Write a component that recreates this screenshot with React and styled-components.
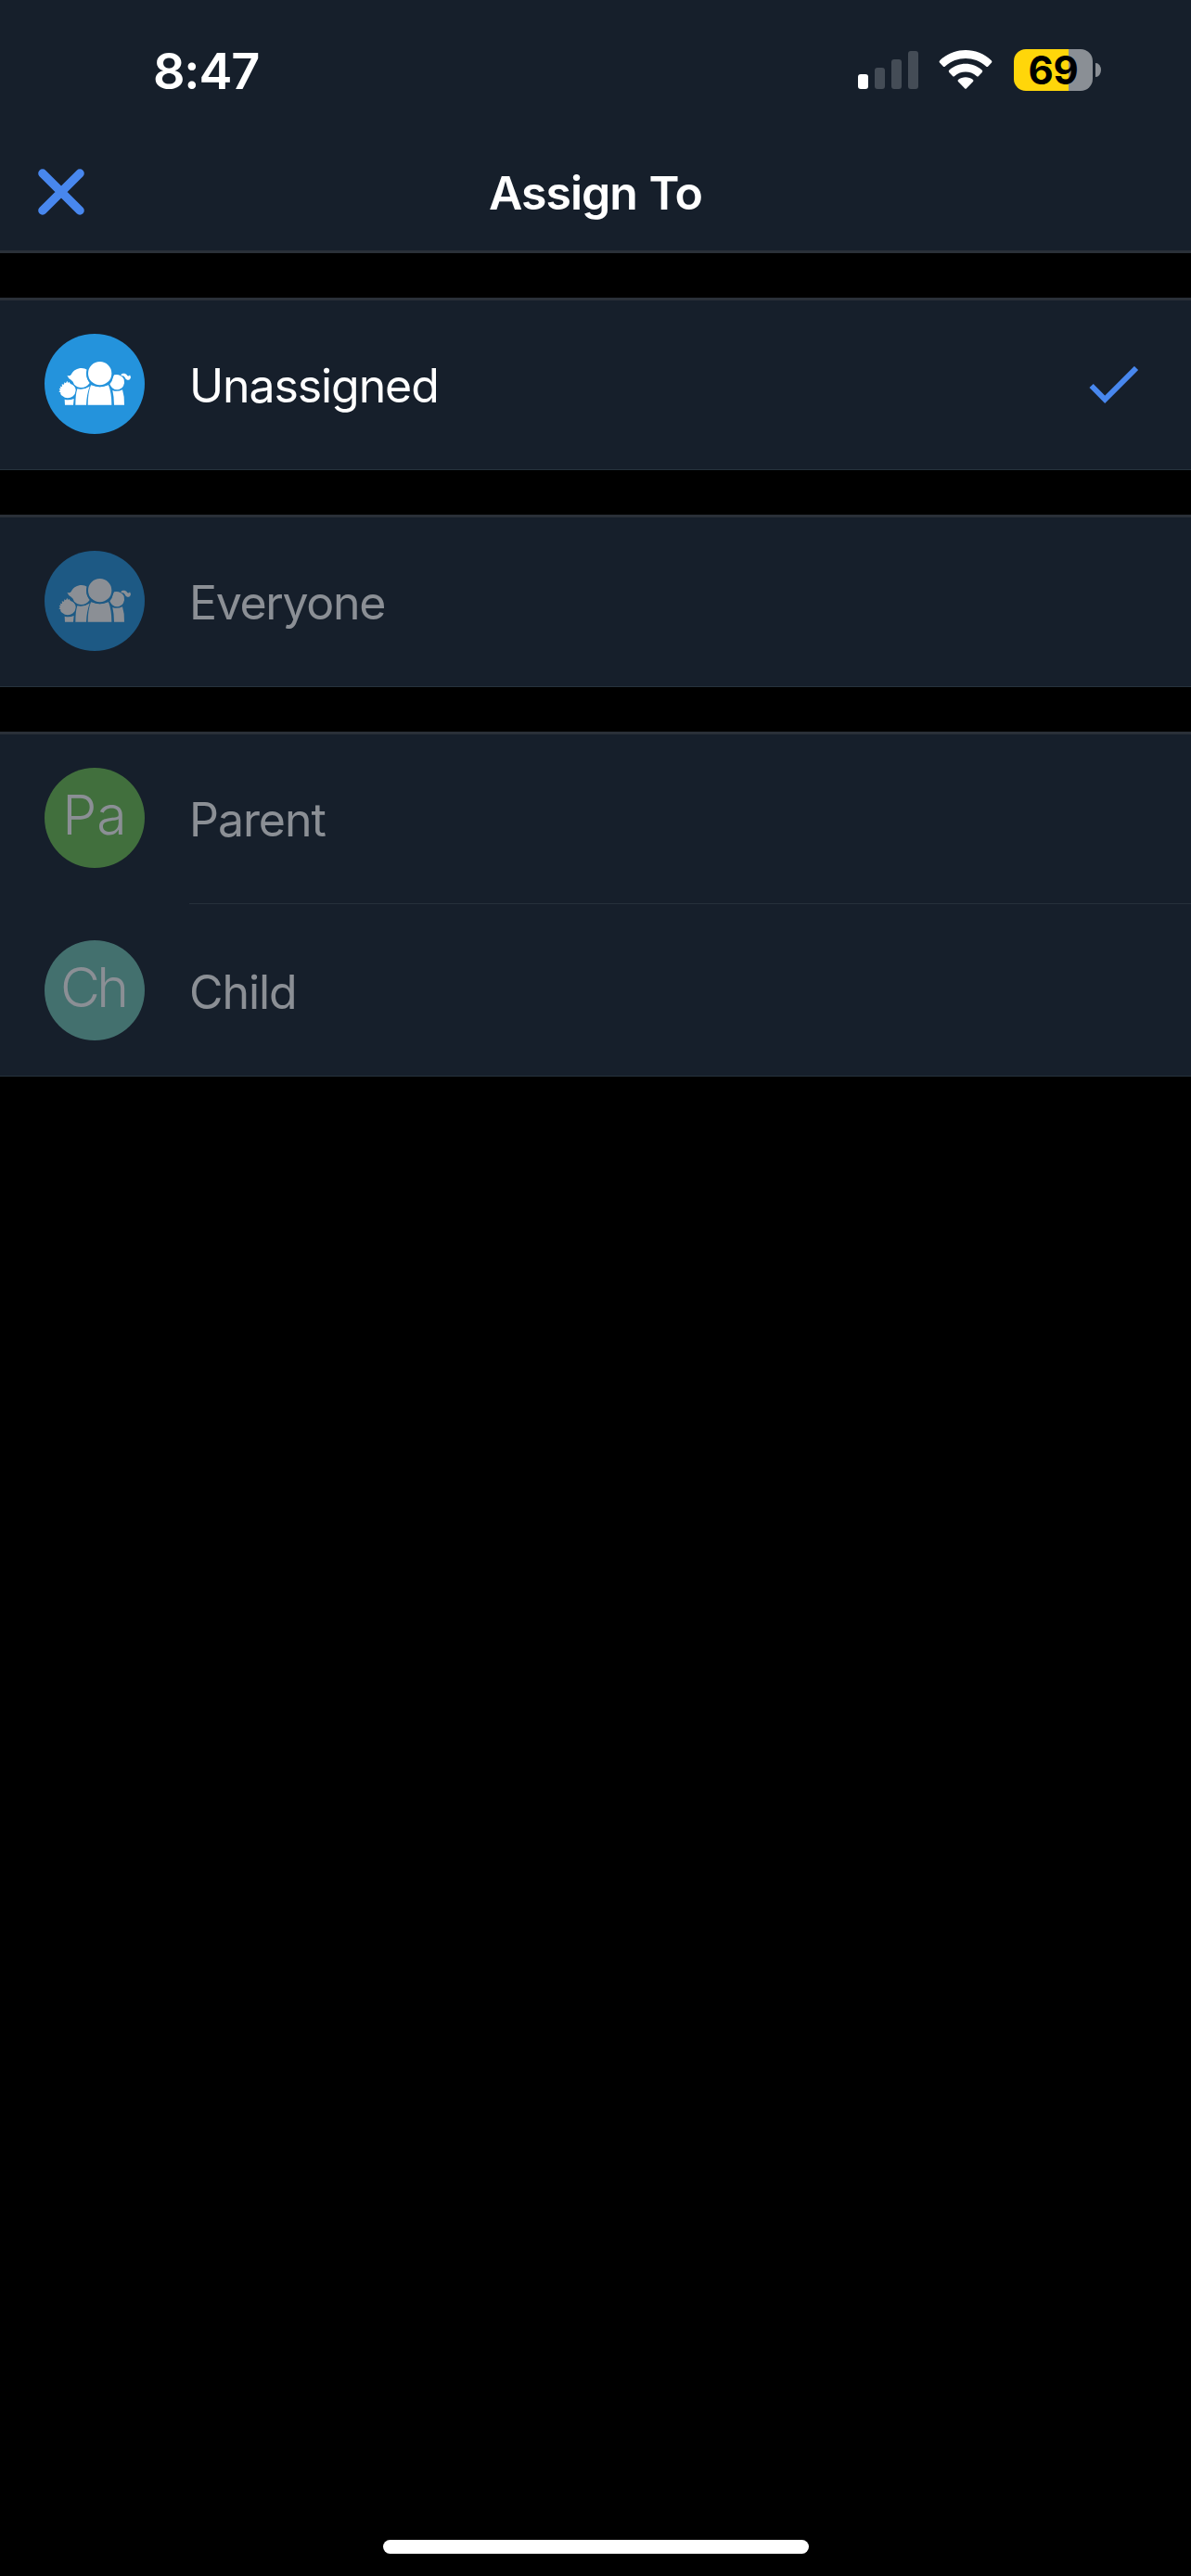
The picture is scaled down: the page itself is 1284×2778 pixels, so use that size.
import React from "react";
import styled, { createGlobalStyle } from "styled-components";

const GlobalStyle = createGlobalStyle`
  html, body { margin: 0; background: #000; }
  * { box-sizing: border-box; }
`;

const Screen = styled.main`
  display: flex;
  flex-direction: column;
  width: 1284px;
  height: 2778px;
  background: #000;
  color: #fff;
  font-family: Inter, "Liberation Sans", sans-serif;
  overflow: hidden;
`;

const Header = styled.header`
  height: 273px;
  background: #161f2b;
  border-bottom: 3px solid #2a3038;
`;

const StatusBar = styled.div`
  display: flex;
  align-items: center;
  justify-content: space-between;
  height: 150px;
  padding: 0 97px 0 165px;
`;

const Time = styled.div`
  padding-top: 4px;
  font-size: 54px;
  line-height: 60px;
  font-weight: 600;
  letter-spacing: -1.2px;
`;

const StatusIcons = styled.div`
  display: flex;
  align-items: center;
`;

const Signal = styled.div`
  display: flex;
  align-items: flex-end;
  gap: 7px;
  height: 42px;
  margin-right: 22px;
`;

const Bar = styled.span`
  width: 11px;
  height: ${(p) => p.$h}px;
  border-radius: 3px;
  background: ${(p) => (p.$on ? "#fff" : "#444c56")};
`;

const Wifi = styled.svg`
  width: 58px;
  height: 42px;
  margin-right: 23px;
`;

const Battery = styled.div`
  display: flex;
  align-items: center;
  justify-content: center;
  width: 85px;
  height: 45px;
  border-radius: 13px;
  background: linear-gradient(to right, #ffd60a 59px, #8a8f95 59px);
  color: #000;
  font-size: 42px;
  line-height: 45px;
  font-weight: 650;
  letter-spacing: -0.4px;
`;

const BatteryTip = styled.span`
  width: 6px;
  height: 15px;
  margin-left: 3px;
  border-radius: 0 6px 6px 0 / 0 8px 8px 0;
  background: #8a8f95;
`;

const NavBar = styled.div`
  display: grid;
  grid-template-columns: 132px 1fr 132px;
  align-items: center;
  height: 120px;
`;

const CloseButton = styled.button`
  display: flex;
  padding: 0 0 6px 41px;
  border: 0;
  background: none;
`;

const Title = styled.h1`
  margin: 0;
  padding-bottom: 4px;
  text-align: center;
  font-size: 50px;
  line-height: 60px;
  font-weight: 600;
  letter-spacing: -1px;
  word-spacing: 1px;
`;

const Groups = styled.div`
  display: flex;
  flex-direction: column;
  gap: 48px;
  padding-top: 48px;
`;

const Group = styled.section`
  border-top: 3px solid #2a3038;
  border-bottom: 1px solid #26323d;
  background: #161f2b;
`;

const Row = styled.div`
  display: flex;
  align-items: flex-start;
  height: 182px;
  padding-left: 48px;

  & + & {
    height: 186px;
  }
`;

const Avatar = styled.div`
  flex: none;
  display: flex;
  justify-content: center;
  width: 108px;
  height: 108px;
  margin: ${(p) => (p.$inset ? 40 : 36)}px 48px 0 0;
  border-radius: 50%;
  background: ${(p) => p.$color};
  opacity: ${(p) => (p.$dim ? 0.5 : 1)};
`;

const Initials = styled.span`
  font-size: 59px;
  line-height: 102px;
  font-weight: 270;
  letter-spacing: ${(p) => p.$track}px;
  padding-right: ${(p) => -p.$track}px;
  color: #fff;
`;

const RowBody = styled.div`
  flex: 1;
  display: flex;
  justify-content: space-between;
  height: 100%;
  padding: ${(p) => (p.$divided ? 63 : 60)}px 56px 0 0;
  border-top: ${(p) => (p.$divided ? "1px solid #26303b" : "0")};
`;

const Label = styled.span`
  font-size: 50px;
  line-height: 64px;
  letter-spacing: ${(p) => p.$track}px;
  opacity: ${(p) => (p.$dim ? 0.5 : 1)};
`;

const CheckMark = styled.svg`
  width: 56px;
  height: 44px;
  margin-top: 11px;
`;

const HomeIndicator = styled.div`
  width: 459px;
  height: 15px;
  margin: auto auto 24px 413px;
  border-radius: 8px;
  background: #fff;
`;

function FamilyIcon() {
  return (
    <svg width="108" height="108" viewBox="54 60 324 324" fill="#fff">
      <path d="M119 272Q134 276 149 270L147 290H120Z" />
      <path d="M112 261Q104 257 106 250L100 247L105 243L101 237L107 236L104 230L111 231L110 223L117 224L118 217L123 220L127 212L130 219L133 215Q137 223 145 225Q155 232 155 243Q154 255 146 262Q138 268 129 268Q119 268 112 261Z" />
      <path d="M160 238Q180 242 200 230Q190 257 189 290H154Q154 257 160 238Z" />
      <path
        d="M127 194Q135 198 140 192C148 177 160 171 174 171Q184 171 193 177Q188 194 193 207Q196 214 200 219C193 230 184 234 173 234C164 234 156 230 150 224Q147 213 140 209Q131 205 127 194Z"
        stroke="#2493dc"
        strokeWidth="7"
        paintOrder="stroke"
      />
      <path d="M274 243Q289 249 306 241Q313 263 312 290H279Q279 264 274 243Z" />
      <path d="M279 193Q290 190 299 195Q308 199 311 207Q314 219 309 229Q302 240 289 241Q273 241 265 223Q274 213 275 202Z" />
      <path d="M301 192C306 187 316 187 320 193C323 198 328 198 330 193L333 200C331 211 320 212 316 205C312 197 309 194 303 196Z" />
      <path d="M204 226Q233 237 261 226Q271 252 271 290H194Q194 252 204 226Z" />
      <circle cx="233" cy="188" r="41" fill="none" stroke="#2493dc" strokeWidth="6" />
      <circle cx="233" cy="188" r="38" />
    </svg>
  );
}

const groups = [
  [{ name: "Unassigned", color: "#2493dc", checked: true, track: -1.1 }],
  [{ name: "Everyone", color: "#2493dc", track: -1.35 }],
  [
    { name: "Parent", color: "#6dbe4f", initials: "Pa", initialsTrack: 0, track: -1.05 },
    { name: "Child", color: "#71c0b1", initials: "Ch", initialsTrack: -3.5, track: -1.05 },
  ],
];

export default function App() {
  return (
    <Screen>
      <GlobalStyle />
      <Header>
        <StatusBar>
          <Time>8:47</Time>
          <StatusIcons>
            <Signal>
              <Bar $h={16} $on />
              <Bar $h={23} />
              <Bar $h={32} />
              <Bar $h={41} />
            </Signal>
            <Wifi viewBox="0 0 58 42" fill="#fff">
              <path d="M1.2 11.2Q0 12.6 1.2 13.8L4.7 17.5Q5.8 18.7 7 17.5C19.5 6.3 38.5 6.3 51 17.5Q52.2 18.7 53.3 17.5L56.8 13.8Q58 12.6 56.8 11.2C41 -3.6 17 -3.6 1.2 11.2Z" />
              <path d="M11.2 21.8Q10.2 22.9 11.2 24L15 27.9Q16.1 28.9 17.2 27.9C24 22 34 22 40.8 27.9Q41.9 28.9 43 27.9L46.8 24Q47.8 22.9 46.8 21.8C36.7 12.5 21.3 12.5 11.2 21.8Z" />
              <path d="M21 32Q20.2 33 21 34L28 41.2Q29 42.2 30 41.2L37 34Q37.8 33 37 32C32.5 28.2 25.5 28.2 21 32Z" />
            </Wifi>
            <Battery>69</Battery>
            <BatteryTip />
          </StatusIcons>
        </StatusBar>
        <NavBar>
          <CloseButton aria-label="Close">
            <svg width="50" height="50" viewBox="0 0 50 50" stroke="#4887ee" strokeWidth="9.4" strokeLinecap="round">
              <path d="M4.9 5L45.1 45M45.1 5L4.9 45" />
            </svg>
          </CloseButton>
          <Title>Assign To</Title>
        </NavBar>
      </Header>
      <Groups>
        {groups.map((rows) => (
          <Group key={rows[0].name}>
            {rows.map((row, i) => (
              <Row key={row.name}>
                <Avatar $color={row.color} $dim={!row.checked} $inset={i > 0}>
                  {row.initials ? (
                    <Initials $track={row.initialsTrack}>{row.initials}</Initials>
                  ) : (
                    <FamilyIcon />
                  )}
                </Avatar>
                <RowBody $divided={i > 0}>
                  <Label $dim={!row.checked} $track={row.track}>{row.name}</Label>
                  {row.checked && (
                    <CheckMark viewBox="0 0 56 44" fill="none" stroke="#4887ee" strokeWidth="6">
                      <path d="M4.6 21L19.2 35.8L53 2" />
                    </CheckMark>
                  )}
                </RowBody>
              </Row>
            ))}
          </Group>
        ))}
      </Groups>
      <HomeIndicator />
    </Screen>
  );
}
